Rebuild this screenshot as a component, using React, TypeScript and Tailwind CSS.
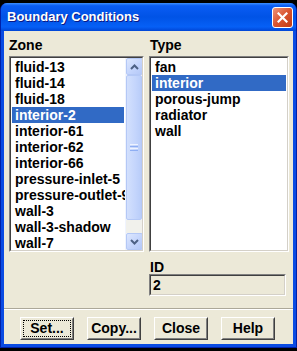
const ZONES = [
  "fluid-13",
  "fluid-14",
  "fluid-18",
  "interior-2",
  "interior-61",
  "interior-62",
  "interior-66",
  "pressure-inlet-5",
  "pressure-outlet-9",
  "wall-3",
  "wall-3-shadow",
  "wall-7",
];

const TYPES = ["fan", "interior", "porous-jump", "radiator", "wall"];

function Sunken({ className = "", inner = "bg-white", children }: { className?: string; inner?: string; children?: React.ReactNode }) {
  return (
    <div className={`border border-t-[#808080] border-l-[#808080] border-b-white border-r-white ${className}`}>
      <div className={`h-full border border-t-[#404040] border-l-[#404040] border-b-[#d4d0c8] border-r-[#d4d0c8] ${inner}`}>
        {children}
      </div>
    </div>
  );
}

function ScrollButton({ up }: { up?: boolean }) {
  return (
    <div className="flex h-[17px] w-[17px] shrink-0 items-center justify-center rounded-[2px] border border-[#b4c8f6] bg-[linear-gradient(135deg,#dde7fe,#c2d3fc_60%,#b4c8f7)]">
      <svg width="9" height="6" viewBox="0 0 9 6">
        <path d={up ? "M1 5 L4.5 1.5 L8 5" : "M1 1 L4.5 4.5 L8 1"} fill="none" stroke="#4d6185" strokeWidth="2" />
      </svg>
    </div>
  );
}

function ScrollBar() {
  return (
    <div className="flex w-[17px] shrink-0 flex-col border-l border-[#f0f4fe] bg-[#eef1f8]">
      <ScrollButton up />
      <div className="flex h-[145px] items-center justify-center rounded-[2px] border border-[#b4c8f6] bg-[linear-gradient(90deg,#d3e0fd,#c4d5fc_60%,#b9cdf9)]">
        <div className="flex w-[8px] flex-col gap-[1px]">
          <div className="h-[1px] bg-[#eef3ff]" />
          <div className="h-[1px] bg-[#8eaef3]" />
          <div className="h-[1px] bg-[#eef3ff]" />
          <div className="h-[1px] bg-[#8eaef3]" />
        </div>
      </div>
      <div className="flex-1 bg-[#f1f1ec]" />
      <ScrollButton />
    </div>
  );
}

function ListBox({ items, selected, scroll, className }: { items: string[]; selected: string; scroll?: boolean; className: string }) {
  return (
    <Sunken className={className}>
      <div className="flex h-full overflow-hidden">
        <ul className="min-w-0 flex-1 overflow-hidden px-[1px] pt-[1px]">
          {items.map((item) => (
            <li
              key={item}
              className={`h-[16px] whitespace-nowrap pl-[3px] text-[14px] leading-[16px] font-bold ${
                item === selected ? "bg-[#316ac5] text-white" : "text-black"
              }`}
            >
              {item}
            </li>
          ))}
        </ul>
        {scroll && <ScrollBar />}
      </div>
    </Sunken>
  );
}

function Button({ label, focused }: { label: string; focused?: boolean }) {
  return (
    <div className="h-[23px] w-[54px] border border-t-white border-l-white border-b-[#404040] border-r-[#404040]">
      <div className="flex h-full items-center justify-center border border-t-[#ece9d8] border-l-[#ece9d8] border-b-[#808080] border-r-[#808080] p-[1px]">
        <div
          className={`flex h-full w-full items-center justify-center text-[14px] font-bold text-black ${
            focused ? "border border-dotted border-black" : ""
          }`}
        >
          {label}
        </div>
      </div>
    </div>
  );
}

export default function App() {
  return (
    <div className="h-[351px] w-[297px] bg-black pt-[3px] font-['Liberation_Sans',Arial,sans-serif]">
      <div className="flex h-[345px] flex-col overflow-hidden rounded-t-[7px] border-x border-b border-[#0021a8] bg-[#0a4be3]">
        <div className="flex h-[28px] shrink-0 items-center justify-between bg-[linear-gradient(180deg,#3d8fff_0%,#0a5cf4_10%,#0053e6_50%,#0660f6_85%,#0045d6_100%)] pr-[3px] pl-[6px]">
          <span className="text-[13px] font-bold text-white [text-shadow:1px_1px_#0a1883]">Boundary Conditions</span>
          <div className="flex h-[21px] w-[21px] items-center justify-center rounded-[3px] border border-white bg-[linear-gradient(135deg,#ee9479,#d9532f_50%,#c03c15)]">
            <svg width="11" height="11" viewBox="0 0 11 11">
              <path d="M1.5 1.5 L9.5 9.5 M9.5 1.5 L1.5 9.5" stroke="white" strokeWidth="2.2" strokeLinecap="square" />
            </svg>
          </div>
        </div>

        <div className="mx-[3px] mb-[3px] flex flex-1 flex-col bg-[#ece9d8] pt-[6px]">
          <div className="flex gap-[5px] pl-[5px]">
            <div className="flex w-[135px] flex-col">
              <p className="mb-[3px] h-[16px] text-[14px] leading-[16px] font-bold text-black">Zone</p>
              <ListBox items={ZONES} selected="interior-2" scroll className="h-[196px]" />
            </div>
            <div className="flex w-[140px] flex-col">
              <p className="mb-[3px] h-[16px] pl-[1px] text-[14px] leading-[16px] font-bold text-black">Type</p>
              <ListBox items={TYPES} selected="interior" className="h-[196px]" />
              <p className="mt-[8px] h-[14px] pl-[1px] text-[14px] leading-[14px] font-bold text-black">ID</p>
              <Sunken className="h-[22px] w-[137px]" inner="bg-[#ece9d8]">
                <p className="pl-[2px] text-[14px] leading-[18px] font-bold text-black">2</p>
              </Sunken>
            </div>
          </div>

          <div className="mt-[12px] h-[2px] border-t border-b border-t-[#aca899] border-b-white" />

          <div className="mt-[7px] flex gap-[13px] pl-[16px]">
            <Button label="Set..." focused />
            <Button label="Copy..." />
            <Button label="Close" />
            <Button label="Help" />
          </div>
        </div>
      </div>
    </div>
  );
}
